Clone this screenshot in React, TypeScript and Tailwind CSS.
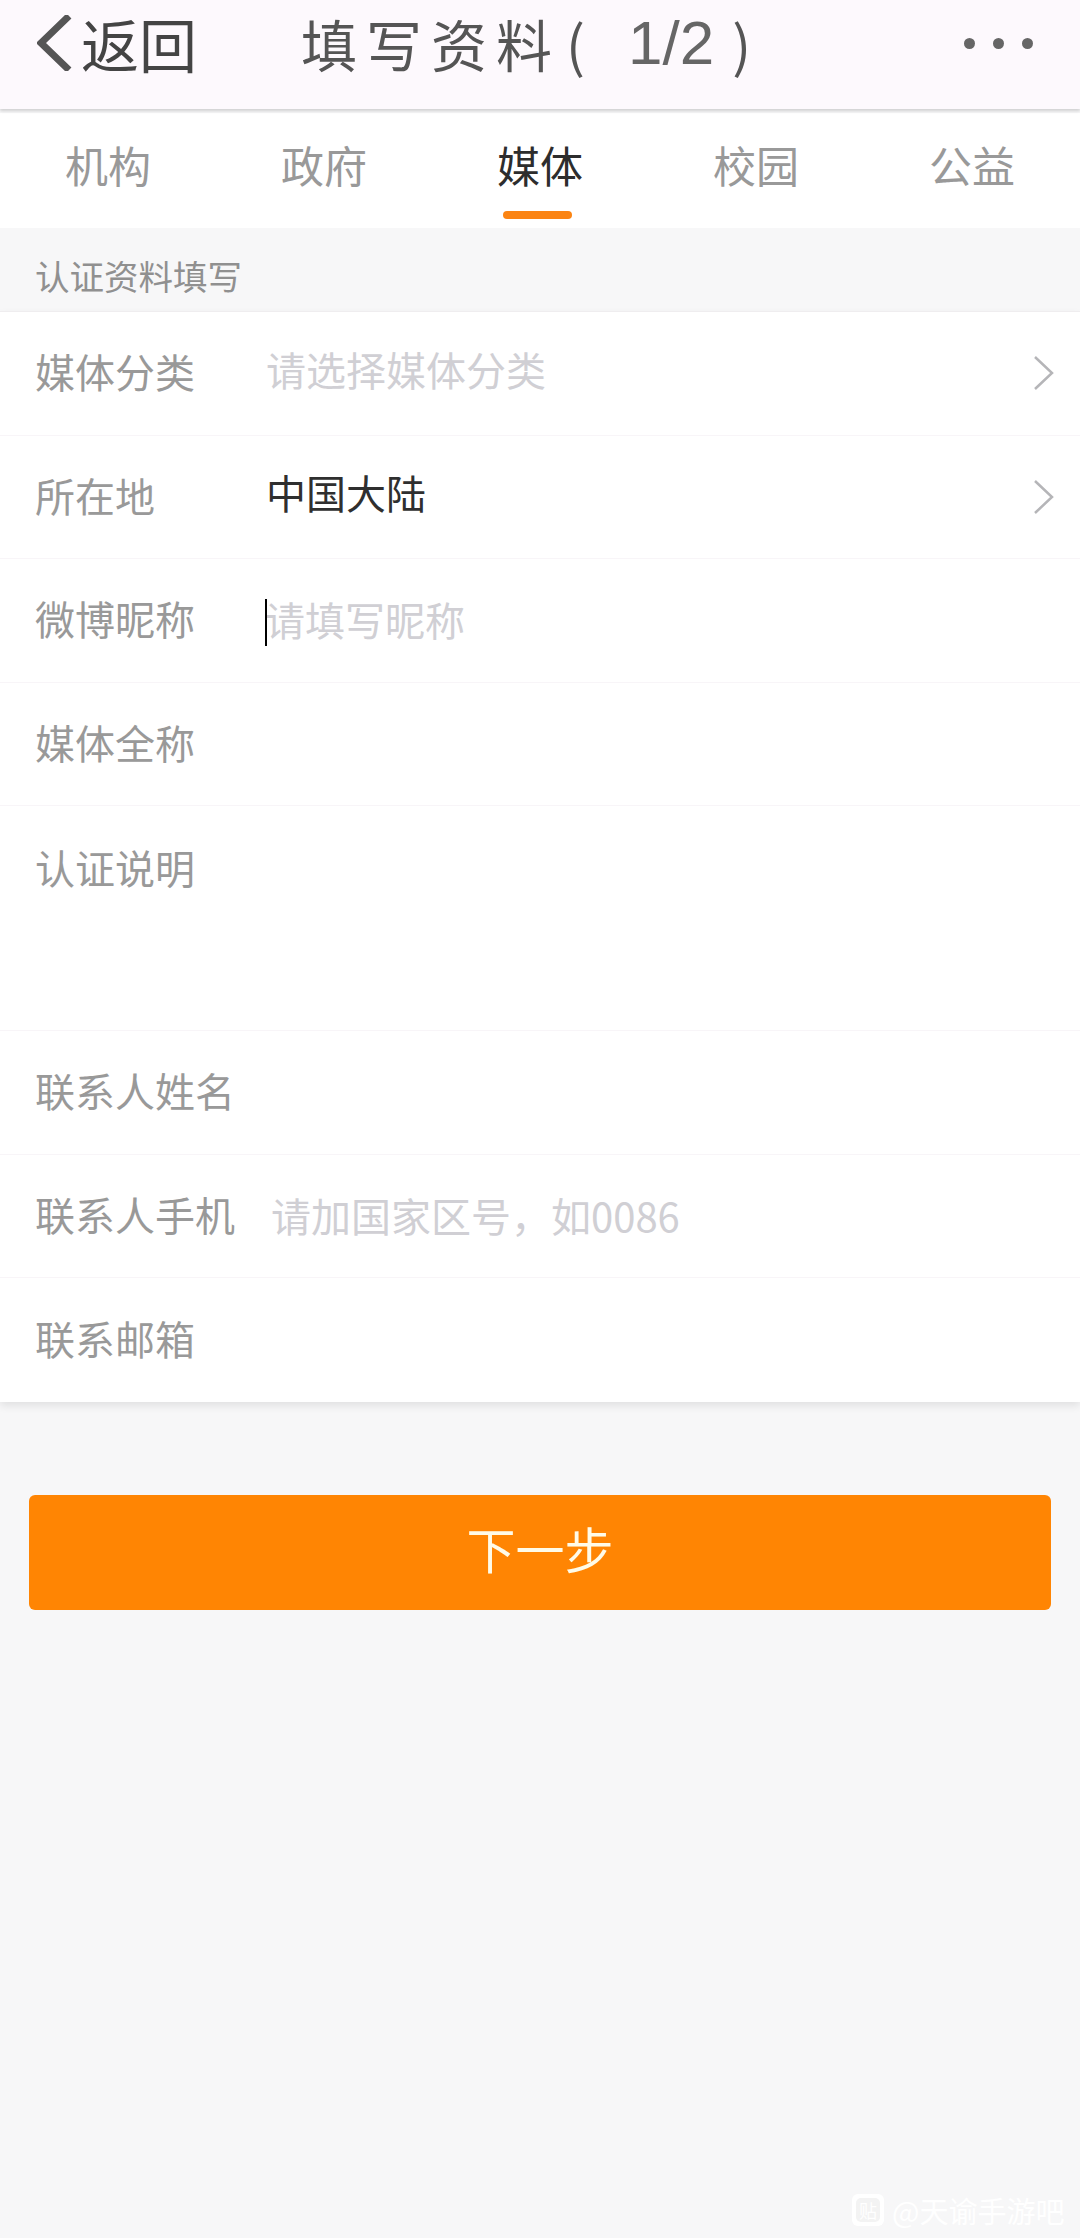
const font = { fontFamily: '"Noto Sans CJK SC", "Liberation Sans", sans-serif' };

function Chevron() {
  return (
    <svg width="22" height="36" viewBox="0 0 22 36" fill="none" className="absolute right-[25px] top-1/2 -translate-y-1/2">
      <path d="M2 2 L19 18 L2 34" stroke="#b5b5b8" strokeWidth="2.5" />
    </svg>
  );
}

function Row({ label, h = "h-[123.5px]", children, chevron, valueLeft = "w-[231px]" }: { label: string; h?: string; children?: React.ReactNode; chevron?: boolean; valueLeft?: string }) {
  return (
    <div className={`relative flex items-center ${h} pl-[35px] border-b border-[#f8f5f8] last:border-b-0`}>
      <div className={`${valueLeft} shrink-0 text-[40px] leading-[56px] -mt-[4px] text-[#999999] font-normal`}>{label}</div>
      {children}
      {chevron && <Chevron />}
    </div>
  );
}

const placeholder = "text-[40px] leading-[56px] text-[#d0cfd4] font-normal";

export default function App() {
  return (
    <div style={font} className="relative w-[1080px] h-[2238px] overflow-hidden bg-[#f7f7f8]">
      <header className="relative flex items-center h-[109px] bg-[#fdf9fd] shadow-[0_2px_3px_rgba(0,0,0,0.16)] z-10 pb-[24px]">
        <svg width="36" height="56" viewBox="0 0 36 56" fill="none" className="ml-[37px] shrink-0">
          <path d="M32 1 L4 28 L32 55" stroke="#555555" strokeWidth="7" />
        </svg>
        <div className="ml-[8px] w-[220px] shrink-0 text-[58px] leading-[70px] text-[#444444] font-normal">返回</div>
        <div className="text-[56px] leading-[70px] tracking-[9px] text-[#555555] font-normal whitespace-nowrap">填写资料</div>
        <div className="ml-[5px] text-[56px] leading-[70px] text-[#555555] font-normal whitespace-nowrap">(</div>
        <div style={{ fontFamily: '"Liberation Sans", sans-serif' }} className="ml-[43px] text-[62px] leading-[70px] text-[#666666] whitespace-nowrap">1/2</div>
        <div className="ml-[18px] text-[56px] leading-[70px] text-[#555555] font-normal whitespace-nowrap">)</div>
        <div className="ml-auto mr-[47px] flex gap-[18px] mt-[2px]">
          <span className="w-[11px] h-[11px] rounded-full bg-[#666666]" />
          <span className="w-[11px] h-[11px] rounded-full bg-[#666666]" />
          <span className="w-[11px] h-[11px] rounded-full bg-[#666666]" />
        </div>
      </header>

      <nav className="mt-[4px] grid grid-cols-5 h-[115px] bg-white">
        {["机构", "政府", "媒体", "校园", "公益"].map((t) => (
          <div key={t} className={`relative flex justify-center pt-[22px] text-[43px] leading-[58px] font-normal ${t === "媒体" ? "text-[#2d2d2d]" : "text-[#999999]"}`}>
            {t}
            {t === "媒体" && <span className="absolute left-[71px] top-[98px] w-[69px] h-[8px] rounded-full bg-[#fb8413]" />}
          </div>
        ))}
      </nav>

      <div className="h-[83px] pl-[35px] pt-[23px] text-[34.5px] leading-[48px] text-[#909090] font-normal">认证资料填写</div>

      <section className="bg-white border-t border-[#efedef] shadow-[0_4px_8px_rgba(0,0,0,0.09)]">
        <Row label="媒体分类" chevron>
          <div className={`${placeholder} -mt-[8px]`}>请选择媒体分类</div>
        </Row>
        <Row label="所在地" chevron>
          <div className="text-[40px] leading-[56px] text-[#2f2f2f] -mt-[9px] font-normal">中国大陆</div>
        </Row>
        <Row label="微博昵称">
          <div className={`relative -ml-[1px] -mt-[2px] ${placeholder}`}>
            <span className="absolute left-0 top-[8px] w-[2px] h-[47px] bg-black" />
            请填写昵称
          </div>
        </Row>
        <Row label="媒体全称" />
        <Row label="认证说明" h="h-[225px] !items-start pt-[37px]" />
        <Row label="联系人姓名" />
        <Row label="联系人手机" valueLeft="w-[236px]">
          <div className={`${placeholder} -mt-[1px]`}>请加国家区号，如0086</div>
        </Row>
        <Row label="联系邮箱" />
      </section>

      <button className="block mt-[93px] ml-[29px] w-[1022px] h-[115px] rounded-[6px] bg-[#ff8503] text-[49px] leading-[66px] text-[#fffbe8] font-normal pb-[8px]">
        下一步
      </button>

      <div className="absolute left-[852px] top-[2193px] flex items-center gap-[8px] text-white">
        <div className="relative w-[32px] h-[32px] rounded-[6px] bg-white flex items-center justify-center">
          <span className="w-[24px] h-[24px] rounded-[5px] bg-[#f3f3f3] text-[18px] leading-[24px] text-white text-center">贴</span>
        </div>
        <span className="text-[29px] leading-[34px] font-normal whitespace-nowrap">@天谕手游吧</span>
      </div>
    </div>
  );
}
